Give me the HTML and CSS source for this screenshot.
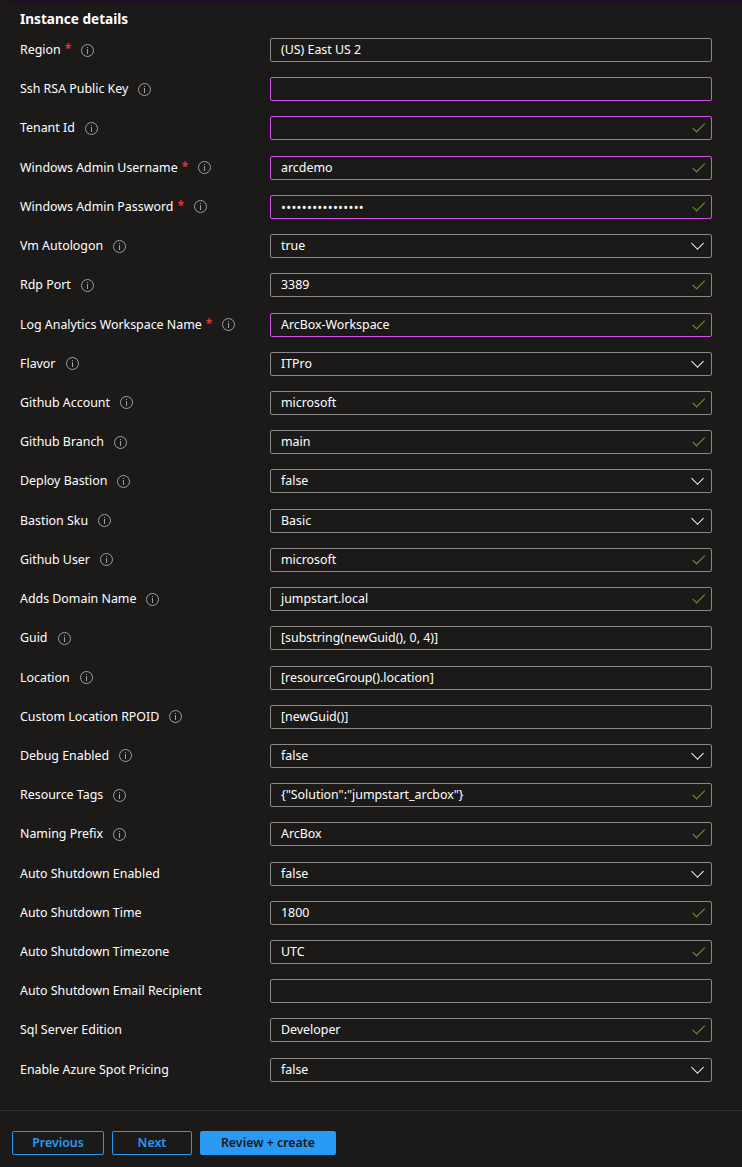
FILE: index.html
```html
<!DOCTYPE html>
<html>
<head>
<meta charset="utf-8">
<link rel="stylesheet" href="styles.css">
</head>
<body>
<div class="topbar"></div>
<main class="form">
  <h2 class="heading">Instance details</h2>
  <div class="rows">
    <div class="row"><div class="label">Region<span class="req">*</span><span class="info"></span></div><div class="field plain">(US) East US 2</div></div>
    <div class="row"><div class="label">Ssh RSA Public Key<span class="info"></span></div><div class="field error"></div></div>
    <div class="row"><div class="label">Tenant Id<span class="info"></span></div><div class="field error ok"></div></div>
    <div class="row"><div class="label">Windows Admin Username<span class="req">*</span><span class="info"></span></div><div class="field error ok">arcdemo</div></div>
    <div class="row"><div class="label">Windows Admin Password<span class="req">*</span><span class="info"></span></div><div class="field error ok"><span class="dots">••••••••••••••••</span></div></div>
    <div class="row"><div class="label">Vm Autologon<span class="info"></span></div><div class="field select">true</div></div>
    <div class="row"><div class="label">Rdp Port<span class="info"></span></div><div class="field ok">3389</div></div>
    <div class="row"><div class="label">Log Analytics Workspace Name<span class="req">*</span><span class="info"></span></div><div class="field error ok">ArcBox-Workspace</div></div>
    <div class="row"><div class="label">Flavor<span class="info"></span></div><div class="field select">ITPro</div></div>
    <div class="row"><div class="label">Github Account<span class="info"></span></div><div class="field ok">microsoft</div></div>
    <div class="row"><div class="label">Github Branch<span class="info"></span></div><div class="field ok">main</div></div>
    <div class="row"><div class="label">Deploy Bastion<span class="info"></span></div><div class="field select">false</div></div>
    <div class="row"><div class="label">Bastion Sku<span class="info"></span></div><div class="field select">Basic</div></div>
    <div class="row"><div class="label">Github User<span class="info"></span></div><div class="field ok">microsoft</div></div>
    <div class="row"><div class="label">Adds Domain Name<span class="info"></span></div><div class="field ok">jumpstart.local</div></div>
    <div class="row"><div class="label">Guid<span class="info"></span></div><div class="field">[substring(newGuid(), 0, 4)]</div></div>
    <div class="row"><div class="label">Location<span class="info"></span></div><div class="field">[resourceGroup().location]</div></div>
    <div class="row"><div class="label">Custom Location RPOID<span class="info"></span></div><div class="field">[newGuid()]</div></div>
    <div class="row"><div class="label">Debug Enabled<span class="info"></span></div><div class="field select">false</div></div>
    <div class="row"><div class="label">Resource Tags<span class="info"></span></div><div class="field ok">{"Solution":"jumpstart_arcbox"}</div></div>
    <div class="row"><div class="label">Naming Prefix<span class="info"></span></div><div class="field ok">ArcBox</div></div>
    <div class="row"><div class="label">Auto Shutdown Enabled</div><div class="field select">false</div></div>
    <div class="row"><div class="label">Auto Shutdown Time</div><div class="field ok">1800</div></div>
    <div class="row"><div class="label">Auto Shutdown Timezone</div><div class="field ok">UTC</div></div>
    <div class="row"><div class="label">Auto Shutdown Email Recipient</div><div class="field"></div></div>
    <div class="row"><div class="label">Sql Server Edition</div><div class="field ok">Developer</div></div>
    <div class="row"><div class="label">Enable Azure Spot Pricing</div><div class="field select">false</div></div>
  </div>
</main>
<footer class="footer">
  <button class="btn outline prev">Previous</button>
  <button class="btn outline next">Next</button>
  <button class="btn primary">Review + create</button>
</footer>
</body>
</html>
```

FILE: styles.css
```css
html, body {
  margin: 0;
  padding: 0;
  background: #1b1a19;
  color: #ffffff;
  font-family: "Segoe UI", "Noto Sans", "Open Sans", sans-serif;
  font-size: 12.4px;
}

.topbar {
  margin-left: 9px;
  height: 3px;
  background: #1e0f24;
}

.form {
  padding: 0 0 0 20px;
}

.heading {
  margin: 0;
  padding-top: 6px;
  height: 29px;
  font-size: 13.6px;
  font-weight: 700;
  line-height: 20px;
}

.rows {
  display: flex;
  flex-direction: column;
  gap: 15.23px;
}

.row {
  display: flex;
  align-items: center;
  height: 24px;
}

.label {
  width: 250px;
  flex: none;
  display: flex;
  align-items: center;
  white-space: nowrap;
  line-height: 18px;
}

.req {
  color: #e8303a;
  margin-left: 4px;
  font-size: 12px;
  font-weight: 700;
  position: relative;
  top: -1px;
}

.info {
  display: inline-block;
  width: 11px;
  height: 11px;
  margin-left: 10px;
  border: 1px solid #a19f9d;
  border-radius: 50%;
  position: relative;
  flex: none;
}
.info::before {
  content: "";
  position: absolute;
  left: 5px;
  top: 2px;
  width: 1px;
  height: 1px;
  background: #a19f9d;
}
.info::after {
  content: "";
  position: absolute;
  left: 5px;
  top: 4px;
  width: 1px;
  height: 5px;
  background: #a19f9d;
}

.field {
  box-sizing: border-box;
  width: 442px;
  height: 24px;
  border: 1px solid #8a8886;
  border-radius: 2px;
  padding: 0 10px;
  line-height: 22px;
  position: relative;
  white-space: nowrap;
}

.field.error {
  border-color: #d54ee8;
}

.field.ok::after {
  content: "";
  position: absolute;
  right: 7px;
  top: 4px;
  width: 11px;
  height: 5px;
  border-left: 1.5px solid #6a9a32;
  border-bottom: 1.5px solid #6a9a32;
  transform: rotate(-45deg) translate(-1px, 2px);
  transform-origin: center;
}

.field.select::after {
  content: "";
  position: absolute;
  right: 9px;
  top: 4px;
  width: 8px;
  height: 8px;
  border-right: 1.3px solid #ffffff;
  border-bottom: 1.3px solid #ffffff;
  transform: rotate(45deg);
}

.dots {
  letter-spacing: 0.3px;
  font-size: 13px;
}

.footer {
  margin-top: 28px;
  border-top: 1px solid #323130;
  padding: 20px 12px 0;
  display: flex;
  gap: 8px;
  height: 60px;
}

.btn {
  box-sizing: border-box;
  height: 24px;
  border-radius: 2px;
  font-family: "Segoe UI", "Noto Sans", "Open Sans", sans-serif;
  font-size: 12.4px;
  font-weight: 600;
  padding: 0;
  line-height: 20px;
  cursor: pointer;
}

.btn.outline {
  background: transparent;
  border: 1px solid #2899f5;
  color: #2899f5;
}

.btn.prev { width: 92px; }
.btn.next { width: 80px; }

.btn.primary {
  width: 136px;
  background: #2899f5;
  border: 1px solid #2899f5;
  color: #1b1a19;
}
```
